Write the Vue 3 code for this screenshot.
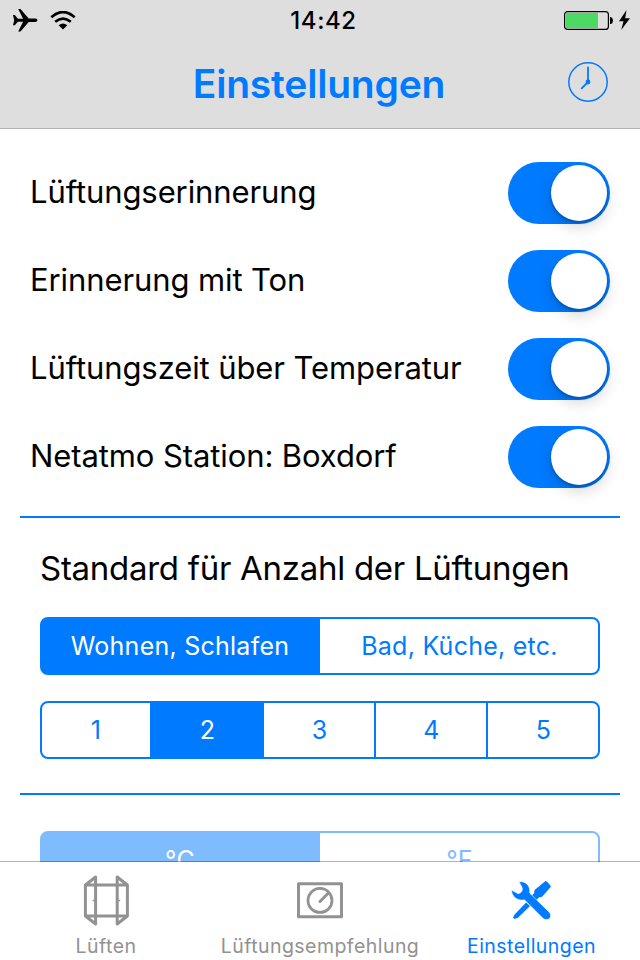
<template>
  <div class="screen">
    <header class="header">
      <div class="status">
        <div class="status-left">
          <svg class="plane" width="25" height="23" viewBox="0 0 25 23">
            <path
              d="M0 6h1.8l3.1 3.8h5.2L5.2 0h2.3l8.2 9.6h6.8c2.6.3 2.6 3.2 0 3.5h-6.8l-8.2 9.5H5.2l4.9-9.8H4.9L1.8 16.3H0l1.2-5.1z"
            />
          </svg>
          <svg class="wifi" width="26" height="19" viewBox="0 0 26 19">
            <path
              d="M1.3 6.2Q13-4.1 24.7 6.2M5.2 10.8q7.8-6.5 15.6 0"
              fill="none"
              stroke="#000"
              stroke-width="2.7"
            />
            <path d="M8.7 14.3q4.3-3.4 8.6 0L13 18.5z" />
          </svg>
        </div>
        <span class="time">14:42</span>
        <div class="status-right">
          <svg width="67" height="21" viewBox="0 0 67 21">
            <rect
              x=".6"
              y="1.6"
              width="43.8"
              height="17.8"
              rx="3"
              fill="none"
              stroke="#000"
              stroke-width="1.2"
            />
            <rect x="2" y="3" width="32" height="15" fill="#4cd964" />
            <path d="M46 7h1q2 1 2 3.5T47 14h-1z" />
            <path d="M62.5 0 55 11.2h4.5L57.2 20 66 8.2h-4.8z" />
          </svg>
        </div>
      </div>
      <div class="navbar">
        <h1 class="title">Einstellungen</h1>
        <button class="clock" type="button" aria-label="Zeit">
          <svg width="40" height="40" viewBox="0 0 40 40">
            <g fill="none" stroke="#007aff" stroke-linecap="round">
              <circle cx="20" cy="20" r="19.2" stroke-width="1.5" />
              <path d="M20 20V5.3M20 20l-6.3 6.4" stroke-width="1.8" />
            </g>
            <circle cx="20" cy="20" r="2.4" fill="#007aff" />
          </svg>
        </button>
      </div>
    </header>

    <main class="content">
      <div class="switches">
        <div v-for="item in switches" :key="item.label" class="switch-row">
          <span class="row-label">{{ item.label }}</span>
          <button
            class="switch"
            :class="{ on: item.on }"
            type="button"
            role="switch"
            :aria-checked="item.on"
            :aria-label="item.label"
            @click="item.on = !item.on"
          >
            <span class="knob"></span>
          </button>
        </div>
      </div>

      <section class="defaults">
        <h2>Standard für Anzahl der Lüftungen</h2>
        <div class="segments">
          <button
            v-for="name in rooms"
            :key="name"
            type="button"
            :class="{ active: name === room }"
            @click="room = name"
          >
            {{ name }}
          </button>
        </div>
        <div class="segments">
          <button
            v-for="n in 5"
            :key="n"
            type="button"
            :class="{ active: n === count }"
            @click="count = n"
          >
            {{ n }}
          </button>
        </div>
      </section>

      <section class="units">
        <div class="segments disabled">
          <button type="button" class="active" disabled>°C</button>
          <button type="button" disabled>°F</button>
        </div>
      </section>
    </main>

    <nav class="tabbar">
      <a class="tab">
        <svg width="48" height="52" viewBox="0 0 48 52">
          <g fill="none" stroke="#929292" stroke-width="3" stroke-linejoin="round">
            <path d="M13.6 10h21M13.6 41h21" />
            <path d="M13.6 2v47L3.4 41V10zM3.4 10h10.2M3.4 41h10.2" />
            <path d="M35.2 2v47l10.2-8V10zM45.4 10H35.2M45.4 41H35.2" />
            <path d="M10.6 25.5h2M36.2 25.5h2" stroke-width="1.5" />
          </g>
        </svg>
        <span>Lüften</span>
      </a>
      <a class="tab">
        <svg width="48" height="52" viewBox="0 0 48 52">
          <g fill="none" stroke="#929292" stroke-width="3">
            <rect x="2.5" y="8.8" width="43" height="33" stroke-linejoin="round" />
            <circle cx="24" cy="25.4" r="12" stroke-width="2.8" />
            <path d="M24 26.5l8.7-8.8" stroke-linecap="round" />
          </g>
        </svg>
        <span>Lüftungsempfehlung</span>
      </a>
      <a class="tab selected">
        <svg width="48" height="52" viewBox="0 0 48 52">
          <g fill="#007aff">
            <path
              d="M37.2 6.2Q38 5.8 39 6.7l3.4 3.7q.9 1 .2 1.7l-8 9.2q-1.5 1.4-3.5.9l-3.3 3.2-4.9-4 3.4-3.3q-.6-1.8.6-3.3z"
            />
            <path d="M18.2 27.5l3.8 3.5L10 42.7 6.3 44 5 42.6l1.8-3.3z" />
            <path
              d="M11 6.9C17.4 5.4 22.9 11 21.6 18L40.5 36.5c5.6 5.5-1 10.6-5.6 6.8L16.4 24.8C9.8 26.5 3.2 21.4 3.6 15.1l6.6 3.6c3.3-.7 5-3.3 3.7-6.7z"
              stroke="#fff"
              stroke-width=".6"
            />
          </g>
        </svg>
        <span>Einstellungen</span>
      </a>
    </nav>
  </div>
</template>

<script setup>
import { reactive, ref } from "vue";

const switches = reactive([
  { label: "Lüftungserinnerung", on: true },
  { label: "Erinnerung mit Ton", on: true },
  { label: "Lüftungszeit über Temperatur", on: true },
  { label: "Netatmo Station: Boxdorf", on: true },
]);

const rooms = ["Wohnen, Schlafen", "Bad, Küche, etc."];
const room = ref("Wohnen, Schlafen");
const count = ref(2);
</script>

<style>
body {
  margin: 0;
  background: #fff;
}
</style>

<style scoped>
.screen {
  width: 640px;
  height: 960px;
  display: flex;
  flex-direction: column;
  overflow: hidden;
  background: #fff;
  color: #000;
  font-family: Inter, "Liberation Sans", sans-serif;
}

button {
  margin: 0;
  padding: 0;
  border: none;
  background: none;
  font-family: inherit;
}

svg {
  display: block;
}

.header {
  height: 128px;
  flex: none;
  background: #dedede;
  border-bottom: 1px solid #b2b2b2;
}

.status {
  height: 40px;
  display: grid;
  grid-template-columns: 1fr auto 1fr;
  align-items: center;
}

.status-left {
  display: flex;
  align-items: center;
  gap: 12px;
  padding-left: 13px;
}

.status-right {
  display: flex;
  justify-content: flex-end;
  padding-right: 9px;
}

.time {
  padding: 1px 0 0 7px;
  font-size: 24px;
  font-weight: 500;
  letter-spacing: 0.6px;
}

.navbar {
  height: 88px;
  display: grid;
  grid-template-columns: 1fr auto 1fr;
  align-items: center;
}

.title {
  grid-column: 2;
  margin: 0;
  padding-right: 2px;
  font-size: 39px;
  font-weight: 600;
  line-height: 88px;
  letter-spacing: -0.2px;
  color: #007aff;
}

.clock {
  justify-self: end;
  margin: 0 32px 4px 0;
}

.content {
  height: 733px;
  flex: none;
  overflow: hidden;
}

.switches {
  height: 367px;
  box-sizing: border-box;
  padding: 20px 10px 0;
  margin: 0 20px;
}

.switch-row {
  height: 88px;
  display: flex;
  align-items: center;
  justify-content: space-between;
}

.row-label {
  padding-bottom: 2px;
  font-size: 31px;
  line-height: 40px;
  letter-spacing: -0.1px;
  white-space: nowrap;
}

.switch {
  width: 102px;
  height: 62px;
  box-sizing: border-box;
  display: flex;
  padding: 3px;
  border-radius: 31px;
  background: #e5e5e5;
}

.switch.on {
  justify-content: flex-end;
  background: #007aff;
}

.knob {
  width: 56px;
  height: 56px;
  border-radius: 50%;
  background: #fff;
  box-shadow: 0 6px 16px rgba(0, 0, 0, 0.16), 0 2px 3px rgba(0, 0, 0, 0.24);
}

.defaults {
  height: 279px;
  box-sizing: border-box;
  margin: 20px 20px 0;
  padding: 0 20px;
  border-top: 2px solid #007aff;
  border-bottom: 2px solid #007aff;
}

h2 {
  height: 99px;
  margin: 0;
  font-size: 33px;
  font-weight: 400;
  line-height: 101px;
  letter-spacing: -0.28px;
  white-space: nowrap;
}

.segments {
  height: 58px;
  display: grid;
  grid-auto-flow: column;
  grid-auto-columns: 1fr;
}

.segments + .segments {
  margin-top: 26px;
}

.segments button {
  border: 2px solid #007aff;
  font-size: 25px;
  line-height: 54px;
  letter-spacing: 0.25px;
  color: #007aff;
}

/* neighbouring segments share one border */
.segments button + button {
  margin-left: -2px;
  padding-left: 1px;
}

.segments button:first-child {
  border-radius: 8px 0 0 8px;
}

.segments button:last-child {
  border-radius: 0 8px 8px 0;
}

.segments button.active {
  z-index: 1;
  background: #007aff;
  color: #fff;
}

.units {
  padding: 36px 40px 0;
}

.disabled {
  opacity: 0.5;
}

.tabbar {
  height: 98px;
  flex: none;
  z-index: 1;
  display: grid;
  grid-template-columns: 212px 216px 207px;
  margin-top: -1px;
  border-top: 1px solid rgba(0, 0, 0, 0.3);
  background: #fff;
  background-clip: padding-box;
}

.tab {
  display: flex;
  flex-direction: column;
  align-items: center;
  padding-top: 13px;
  color: #929292;
  font-size: 19.5px;
  line-height: 24px;
  letter-spacing: 0.45px;
}

.tab span {
  margin-top: 7px;
}

.selected {
  color: #007aff;
}
</style>
